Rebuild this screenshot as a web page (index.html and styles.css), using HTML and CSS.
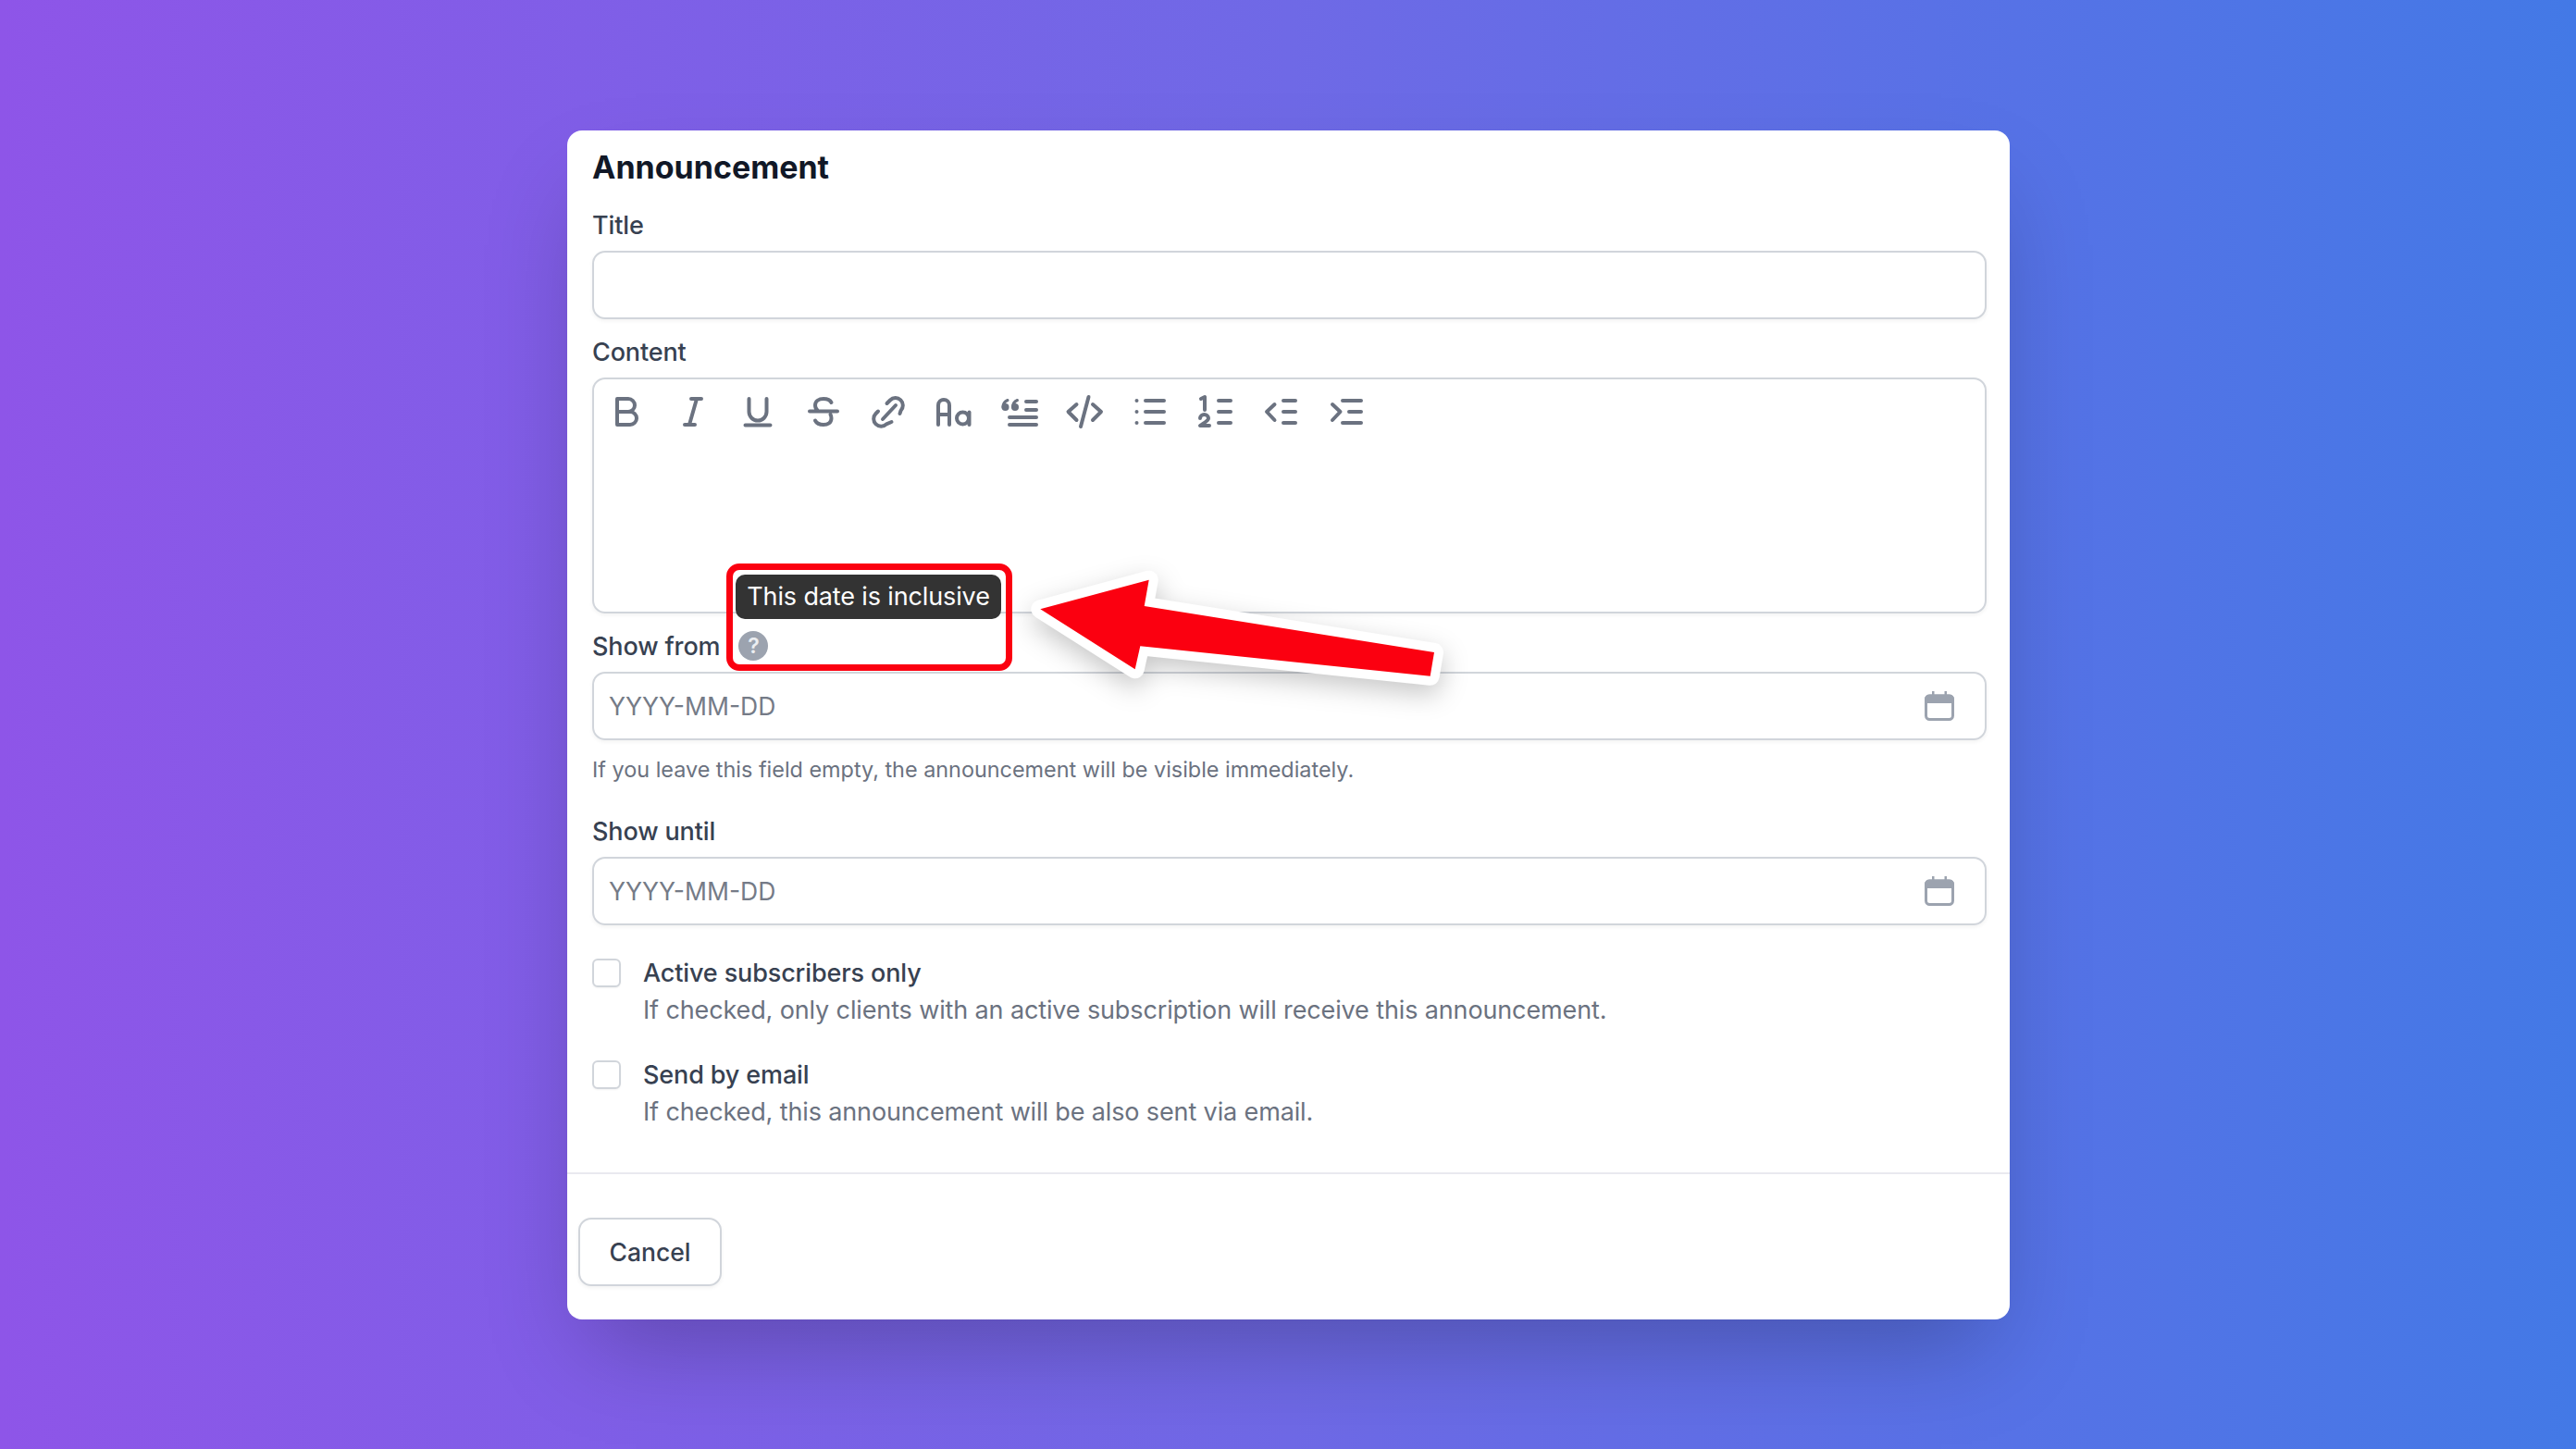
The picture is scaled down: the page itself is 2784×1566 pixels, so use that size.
FILE: index.html
```html
<!DOCTYPE html>
<html lang="en">
<head>
<meta charset="utf-8">
<title>Announcement</title>
<link rel="stylesheet" href="styles.css">
</head>
<body>
<main class="page">
  <section class="modal">
    <form class="form">
      <h1 class="heading">Announcement</h1>

      <label class="label" for="title">Title</label>
      <input class="input" id="title" type="text">

      <label class="label label-next">Content</label>
      <div class="editor">
        <div class="toolbar">
          <svg class="tool" viewBox="0 0 44 44"><path d="M11 8v28M11 8h12a7 7 0 0 1 0 14H11M11 22h14a7 7 0 0 1 0 14H11"/></svg>
          <svg class="tool" viewBox="0 0 44 44"><path d="M20 8h11M13 36h11M26 8l-8 28"/></svg>
          <svg class="tool" viewBox="0 0 44 44"><path d="M12.500 8v14a9.500 9.500 0 0 0 19 0V8M8.500 36.500h27"/></svg>
          <svg class="tool" viewBox="0 0 44 44"><path d="M30.500 12c-1.500-3-4.500-4-8.500-4-5 0-9 2.500-9 7 0 2.500 1 4.500 3 6M29.500 25c.7 1.200 1 2.500 1 4 0 5-4 7-8.500 7-4 0-7.500-1.500-9-4.500M7 21.500h30"/></svg>
          <svg class="tool" viewBox="0 0 44 44"><path d="M20.500 13l3.500-3.500a8 8 0 0 1 11.500 11.300l-1 3.200M16 30l14-15M11 21.500l-2.500 2.500a8 8 0 0 0 11.500 11.300l5.500-2.300"/></svg>
          <svg class="tool" viewBox="0 0 44 44"><path d="M5 36V15a6 6 0 0 1 12 0v21M5 25h12"/><circle cx="31.500" cy="29" r="6.500"/><path d="M38.500 22.500V36"/></svg>
          <svg class="tool" viewBox="0 0 44 44"><path d="M29 11h11M29 20h11M11 28h29M11 36h29"/><path class="tool-thin" d="M9 9.500c-3.500 1.500-5 4.500-5 7.500M19.500 9.500c-3.500 1.500-5 4.500-5 7.500"/><circle class="tool-dot" cx="6.500" cy="17" r="4"/><circle class="tool-dot" cx="17" cy="17" r="4"/></svg>
          <svg class="tool" viewBox="0 0 44 44"><path d="M13.500 14l-9 8 9 9M31 14l9 8-9 9M26.500 6L18 38"/></svg>
          <svg class="tool" viewBox="0 0 44 44"><path d="M17 10h20M17 22h20M17 34h20"/><circle class="tool-dot" cx="7.500" cy="10" r="2"/><circle class="tool-dot" cx="7.500" cy="22" r="2"/><circle class="tool-dot" cx="7.500" cy="34" r="2"/></svg>
          <svg class="tool" viewBox="0 0 44 44"><path d="M26 10h13M26 22h13M26 34h13M7 8l4-2v14M6 29a4.500 4 0 0 1 9 0c0 3-5 5-9 8h10"/></svg>
          <svg class="tool" viewBox="0 0 44 44"><path d="M15.500 14l-8.500 8 8.500 9M25 10h13M25 22h13M25 34h13"/></svg>
          <svg class="tool" viewBox="0 0 44 44"><path d="M7 14l8.500 8-8.500 9M18 10h20M25 22h13M18 34h20"/></svg>
        </div>
      </div>

      <div class="label-row">
        <label class="label">Show from</label>
        <span class="help">?</span>
      </div>
      <div class="date-field">
        <input class="date-input" type="text" placeholder="YYYY-MM-DD">
        <svg class="calendar" viewBox="0 0 32 32"><path class="calendar-top" d="M8 0h2.500v3.500h11V0H24v3.500h3a5 5 0 0 1 5 5V13H0V8.500a5 5 0 0 1 5-5h3z"/><rect class="calendar-body" x="1.500" y="5" width="29" height="25.500" rx="4"/></svg>
      </div>
      <p class="hint">If you leave this field empty, the announcement will be visible immediately.</p>

      <label class="label label-until">Show until</label>
      <div class="date-field">
        <input class="date-input" type="text" placeholder="YYYY-MM-DD">
        <svg class="calendar" viewBox="0 0 32 32"><path class="calendar-top" d="M8 0h2.500v3.500h11V0H24v3.500h3a5 5 0 0 1 5 5V13H0V8.500a5 5 0 0 1 5-5h3z"/><rect class="calendar-body" x="1.500" y="5" width="29" height="25.500" rx="4"/></svg>
      </div>

      <div class="checks">
        <div class="check">
          <input class="checkbox" type="checkbox">
          <div>
            <div class="check-title">Active subscribers only</div>
            <div class="check-text">If checked, only clients with an active subscription will receive this announcement.</div>
          </div>
        </div>
        <div class="check">
          <input class="checkbox" type="checkbox">
          <div>
            <div class="check-title">Send by email</div>
            <div class="check-text">If checked, this announcement will be also sent via email.</div>
          </div>
        </div>
      </div>
    </form>
    <footer class="footer">
      <button class="cancel" type="button">Cancel</button>
    </footer>

    <div class="tooltip">This date is inclusive</div>
    <div class="highlight"></div>
    <svg class="arrow" viewBox="0 0 460 130"><polygon points="14.300,42.300 131.700,10.700 126.700,39 440,89 435.700,114.700 122.300,82.300 116.700,107.300"/></svg>
  </section>
</main>
</body>
</html>
```

FILE: styles.css
```css
* { box-sizing: border-box; }

html, body { margin: 0; padding: 0; }

body {
  font-family: Inter, "Liberation Sans", sans-serif;
  color: #374151;
}

.page {
  width: 2784px;
  height: 1566px;
  overflow: hidden;
  padding-top: 141px;
  padding-left: 613px;
  background: linear-gradient(90deg, #8e55e8 0%, #6f69e6 50%, #4379e6 100%);
}

.modal {
  position: relative;
  width: 1559px;
  height: 1285px;
  background: #fff;
  border-radius: 16px;
  box-shadow: 0 50px 100px -24px rgba(0, 0, 0, 0.25);
}

.form {
  display: flex;
  flex-direction: column;
  height: 1128px;
  padding: 20px 25px 0 27px;
  border-bottom: 2px solid #e9e9ef;
}

.heading {
  margin: 0 0 22px;
  font-size: 34px;
  line-height: 40px;
  font-weight: 700;
  color: #111827;
}

.label {
  display: block;
  padding-top: 1px;
  font-size: 27px;
  letter-spacing: -0.13px;
  line-height: 40px;
  font-weight: 500;
  color: #374151;
  margin-bottom: 7px;
}

.label-next { margin-top: 15px; }
.label-until { margin-top: 31px; margin-bottom: 7px; padding-top: 0; }

.label-row {
  display: flex;
  align-items: center;
  gap: 20px;
  height: 40px;
  margin: 15px 0 8px;
}

.label-row .label { margin: 0; }

.help {
  width: 32px;
  height: 32px;
  border-radius: 50%;
  background: #9ca3af;
  color: #eceef1;
  font-size: 23px;
  font-weight: 600;
  line-height: 32px;
  text-align: center;
}

.input {
  display: block;
  width: 100%;
  height: 74px;
  border: 2px solid #d1d5db;
  border-radius: 14px;
  background: #fff;
  box-shadow: 0 2px 4px rgba(0, 0, 0, 0.05);
  outline: none;
}

.editor {
  height: 255px;
  border: 2px solid #d1d5db;
  border-radius: 14px;
  box-shadow: 0 2px 4px rgba(0, 0, 0, 0.05);
}

.toolbar {
  display: flex;
  gap: 26.6px;
  padding: 13px 0 0 14px;
}

.tool {
  width: 44px;
  height: 44px;
  flex: none;
  fill: none;
  stroke: #6b7280;
  stroke-width: 4;
  stroke-linecap: round;
  stroke-linejoin: round;
}

.tool-dot { fill: #6b7280; stroke: none; }
.tool-thin { stroke-width: 3; }

.date-field {
  display: flex;
  align-items: center;
  height: 74px;
  padding: 0 33px 0 16px;
  border: 2px solid #d1d5db;
  border-radius: 14px;
  box-shadow: 0 2px 4px rgba(0, 0, 0, 0.05);
}

.date-input {
  flex: 1;
  min-width: 0;
  border: 0;
  outline: none;
  padding: 0;
  background: transparent;
  font: 400 26.5px/40px Inter, "Liberation Sans", sans-serif;
  color: #374151;
}

.date-input::placeholder { color: #757b87; opacity: 1; }

.calendar { width: 32px; height: 32px; flex: none; }
.calendar-top { fill: #9ca3af; }
.calendar-body { fill: none; stroke: #9ca3af; stroke-width: 3; }

.hint {
  margin: 16px 0 0;
  font-size: 23.4px;
  line-height: 32px;
  color: #6b7280;
}

.checks {
  display: flex;
  flex-direction: column;
  gap: 30px;
  margin-top: 32px;
}

.check {
  display: flex;
  gap: 24px;
}

.checkbox {
  appearance: none;
  width: 31px;
  height: 31px;
  margin: 4px 0 0;
  flex: none;
  border: 2px solid #d1d5db;
  border-radius: 6px;
  background: #fff;
  box-shadow: 0 1px 2px rgba(0, 0, 0, 0.05);
}

.check-title {
  font-size: 27px;
  letter-spacing: -0.13px;
  line-height: 40px;
  font-weight: 500;
  color: #374151;
}

.check-text {
  font-size: 27px;
  letter-spacing: -0.13px;
  line-height: 40px;
  color: #6b7280;
}

.footer {
  padding: 47px 12px 36px;
}

.cancel {
  display: block;
  width: 155px;
  height: 74px;
  padding: 0;
  border: 2px solid #d1d5db;
  border-radius: 14px;
  background: #fff;
  box-shadow: 0 2px 4px rgba(0, 0, 0, 0.05);
  font: 500 26.5px/40px Inter, "Liberation Sans", sans-serif;
  color: #374151;
}

.tooltip {
  position: absolute;
  left: 182px;
  top: 480px;
  width: 287px;
  height: 48px;
  border-radius: 10px;
  background: #333;
  color: #fff;
  font-size: 27px;
  letter-spacing: -0.13px;
  line-height: 48px;
  text-align: center;
}

.highlight {
  position: absolute;
  left: 172px;
  top: 468px;
  width: 309px;
  height: 116px;
  border: 7px solid #fb0010;
  border-radius: 14px;
}

.arrow {
  position: absolute;
  left: 497px;
  top: 475px;
  width: 460px;
  height: 130px;
  overflow: visible;
  filter: drop-shadow(0 10px 14px rgba(0, 0, 0, 0.22));
}

.arrow polygon {
  fill: #fb0010;
  stroke: #fff;
  stroke-width: 20;
  stroke-linejoin: round;
  paint-order: stroke;
}
```
